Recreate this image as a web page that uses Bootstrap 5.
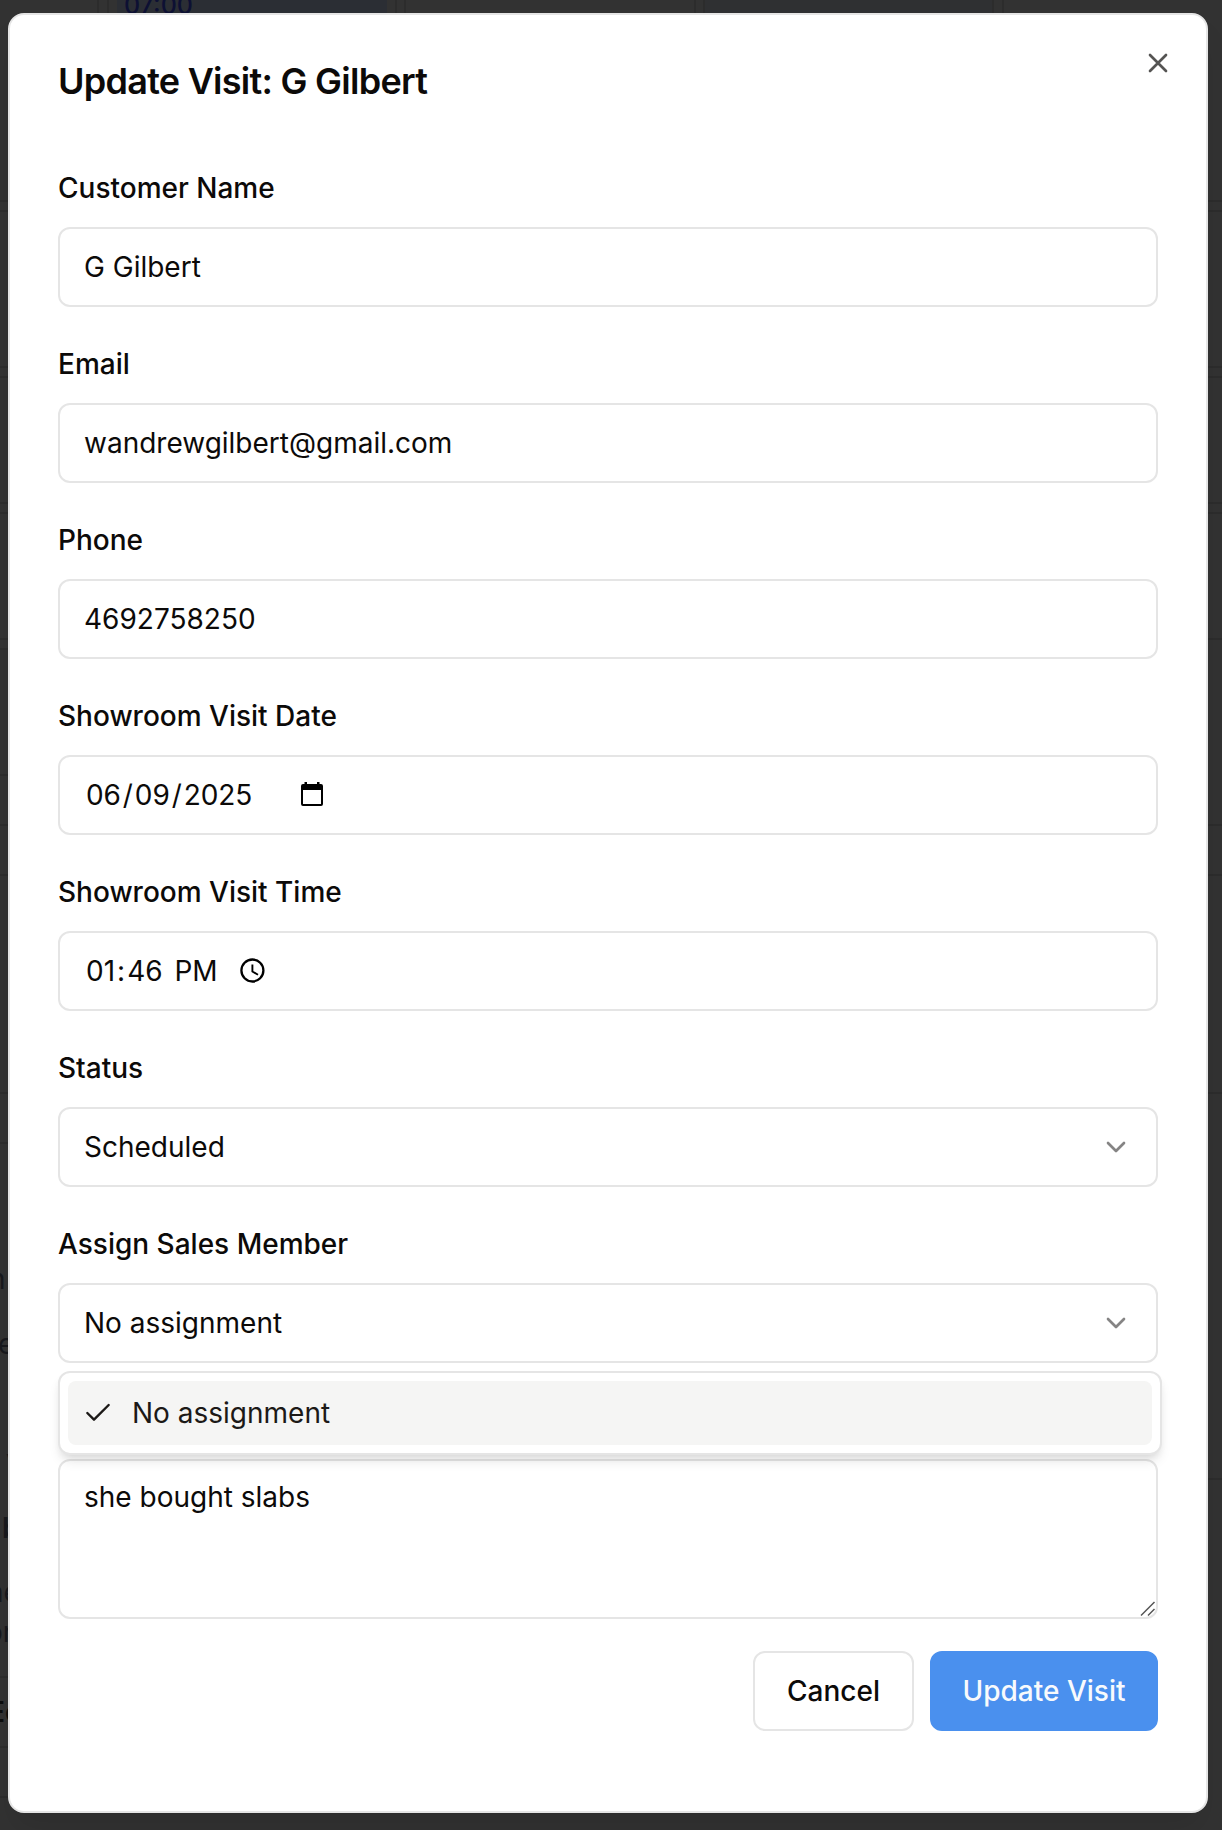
<!DOCTYPE html>
<html lang="en">
<head>
<meta charset="utf-8">
<title>Update Visit</title>
<link rel="stylesheet" href="https://cdn.jsdelivr.net/npm/bootstrap@5.3.0/dist/css/bootstrap.min.css">
<style>
body{font-family:Inter,"Liberation Sans",sans-serif;font-size:28px;color:#0c0a09;background:#323232;height:1830px;overflow:hidden}
/* dimmed calendar page behind the dialog */
.page-under{inset:0;z-index:0}
.page-under svg{display:block}
.page-under text{font-size:28px;fill:#17181c}
.visit-modal{width:1200px;height:1800px;margin:13px 0 0 8px;padding:47px 48px;border:2px solid #e5e5e5;border-radius:16px;background:#fff;z-index:1;box-shadow:0 20px 30px -6px rgba(0,0,0,.1)}
.visit-title{font-size:36px;line-height:36px;font-weight:600;letter-spacing:-.74px;margin:1px 0 64px}
.field{margin-bottom:32px}
.field-label{display:block;font-weight:500;line-height:28px;height:39px;padding-top:11px;margin:0 0 25px}
.form-control{height:80px;border:2px solid #e5e5e5;border-radius:12px;padding:0 24px;font-size:28px;line-height:40px;color:#0c0a09}
.notes-box{height:160px;padding:16px 24px}
.label-gap{height:64px}
.closer{top:32px;right:32px}
.seg{padding:0 2px}
.date-part{width:216px;letter-spacing:-.1px}
.time-part{width:156px}
.glyph{margin-bottom:2px}
.picker{top:1356px;left:48px;width:1104px;height:84px;padding:8px;border:2px solid #e5e5e5;border-radius:12px;background:#fff;box-shadow:0 8px 12px -2px rgba(0,0,0,.1),0 4px 8px -4px rgba(0,0,0,.1)}
.picker-item{height:64px;border-radius:8px;background:#f5f5f4;color:#1c1917;padding-left:14px;gap:18px}
.act{height:80px;border-radius:12px;font-size:28px;font-weight:500;padding:0 32px;border:2px solid #e5e5e5;color:#0c0a09;background:#fff}
.act-main{background:#4a90ee;border-color:#4a90ee;color:#f8fafc;padding:0 30.5px}
.grip{right:-1px;bottom:-1px}
</style>
<script src="https://cdn.jsdelivr.net/npm/bootstrap@5.3.0/dist/js/bootstrap.bundle.min.js"></script>
</head>
<body>
<div class="page-under position-absolute overflow-hidden" aria-hidden="true">
<svg width="1222" height="1830" font-family="Inter, sans-serif">
<path fill="#2b2e34" d="M117 0h270v40H117z"/><path fill="#2f3032" d="M704 0h289v40H704z"/>
<path stroke="#2c2c2c" stroke-width="2" d="M98 0v40M108 0v40M396 0v40M405 0v40M695 0v40M704 0v40M993 0v40M1003 0v40M0 201h1222M0 211h1222M0 367h1222M0 377h1222M0 503h1222M0 513h1222M0 639h1222M0 649h20M0 775h20M0 825h1222M0 875h1222M0 1093h1222M0 1143h20M1200 1479h22M0 1677h20M0 1747h20M0 1797h20"/>
<text x="124" y="13.500" style="fill:#0d1033;font-size:25px;font-weight:500">07:00</text>
<text x="-11" y="1289">n</text><text x="-2" y="1354">e</text><text x="6" y="1470">v</text>
<text x="2" y="1538" style="font-weight:600">b</text><text x="-13" y="1602">ne</text><text x="-14" y="1642">or</text>
<text x="-12" y="1722" style="font-weight:600;fill:#0c0c0c">Ec</text>
</svg>
</div>
<main class="visit-modal position-relative">
<h1 class="visit-title">Update Visit: G Gilbert</h1>
<button class="closer btn p-0 border-0 position-absolute d-flex" aria-label="Close"><svg width="32" height="32" viewBox="0 0 24 24" fill="none" stroke="#555453" stroke-width="2" stroke-linecap="round"><path d="M18 6 6 18M6 6l12 12"/></svg></button>
<div class="field"><label class="field-label">Customer Name</label><div class="form-control d-flex align-items-center">G Gilbert</div></div>
<div class="field"><label class="field-label">Email</label><div class="form-control d-flex align-items-center">wandrewgilbert@gmail.com</div></div>
<div class="field"><label class="field-label">Phone</label><div class="form-control d-flex align-items-center">4692758250</div></div>
<div class="field"><label class="field-label">Showroom Visit Date</label><div class="form-control d-flex align-items-center"><span class="date-part"><span class="seg">06</span>/<span class="seg">09</span>/<span class="seg">2025</span></span><svg class="glyph" width="24" height="26" viewBox="0 0 24 26"><path fill="#000" fill-rule="evenodd" d="M4.500 1H7v2h10V1h2.500v2H21q2 0 2 2v18q0 2-2 2H3q-2 0-2-2V5q0-2 2-2h1.500zM3 9v14h18V9z"/></svg></div></div>
<div class="field"><label class="field-label">Showroom Visit Time</label><div class="form-control d-flex align-items-center"><span class="time-part"><span class="seg">01</span>:<span class="seg">46</span> <span class="seg">PM</span></span><svg class="glyph" width="25" height="25" viewBox="0 0 25 25" fill="none" stroke="#000"><circle cx="12.400" cy="12.500" r="11" stroke-width="2.300"/><path stroke-width="1.900" d="M12.400 6.500V13.500L18 16.800"/></svg></div></div>
<div class="field"><label class="field-label">Status</label><div class="form-control d-flex align-items-center justify-content-between">Scheduled<svg width="32" height="32" viewBox="0 0 24 24" fill="none" stroke="#858484" stroke-width="2" stroke-linecap="round" stroke-linejoin="round"><path d="m6 9 6 6 6-6"/></svg></div></div>
<div class="field"><label class="field-label">Assign Sales Member</label><div class="form-control d-flex align-items-center justify-content-between">No assignment<svg width="32" height="32" viewBox="0 0 24 24" fill="none" stroke="#858484" stroke-width="2" stroke-linecap="round" stroke-linejoin="round"><path d="m6 9 6 6 6-6"/></svg></div></div>
<div class="field position-relative"><div class="label-gap"></div><div class="form-control notes-box position-relative">she bought slabs<svg class="grip position-absolute" width="18" height="18" viewBox="0 0 18 18" stroke="#555" stroke-width="1.500"><path d="M2 15.500 15.500 2M9 15.500l6.500-6.500"/></svg></div></div>
<div class="position-absolute picker"><div class="picker-item d-flex align-items-center"><svg width="32" height="32" viewBox="0 0 24 24" fill="none" stroke="#1c1917" stroke-width="1.800" stroke-linecap="round" stroke-linejoin="round"><path d="M20 6 9 17l-5-5"/></svg>No assignment</div></div>
<div class="d-flex justify-content-end gap-3"><button class="btn act">Cancel</button><button class="btn act act-main">Update Visit</button></div>
</main>
</body>
</html>
